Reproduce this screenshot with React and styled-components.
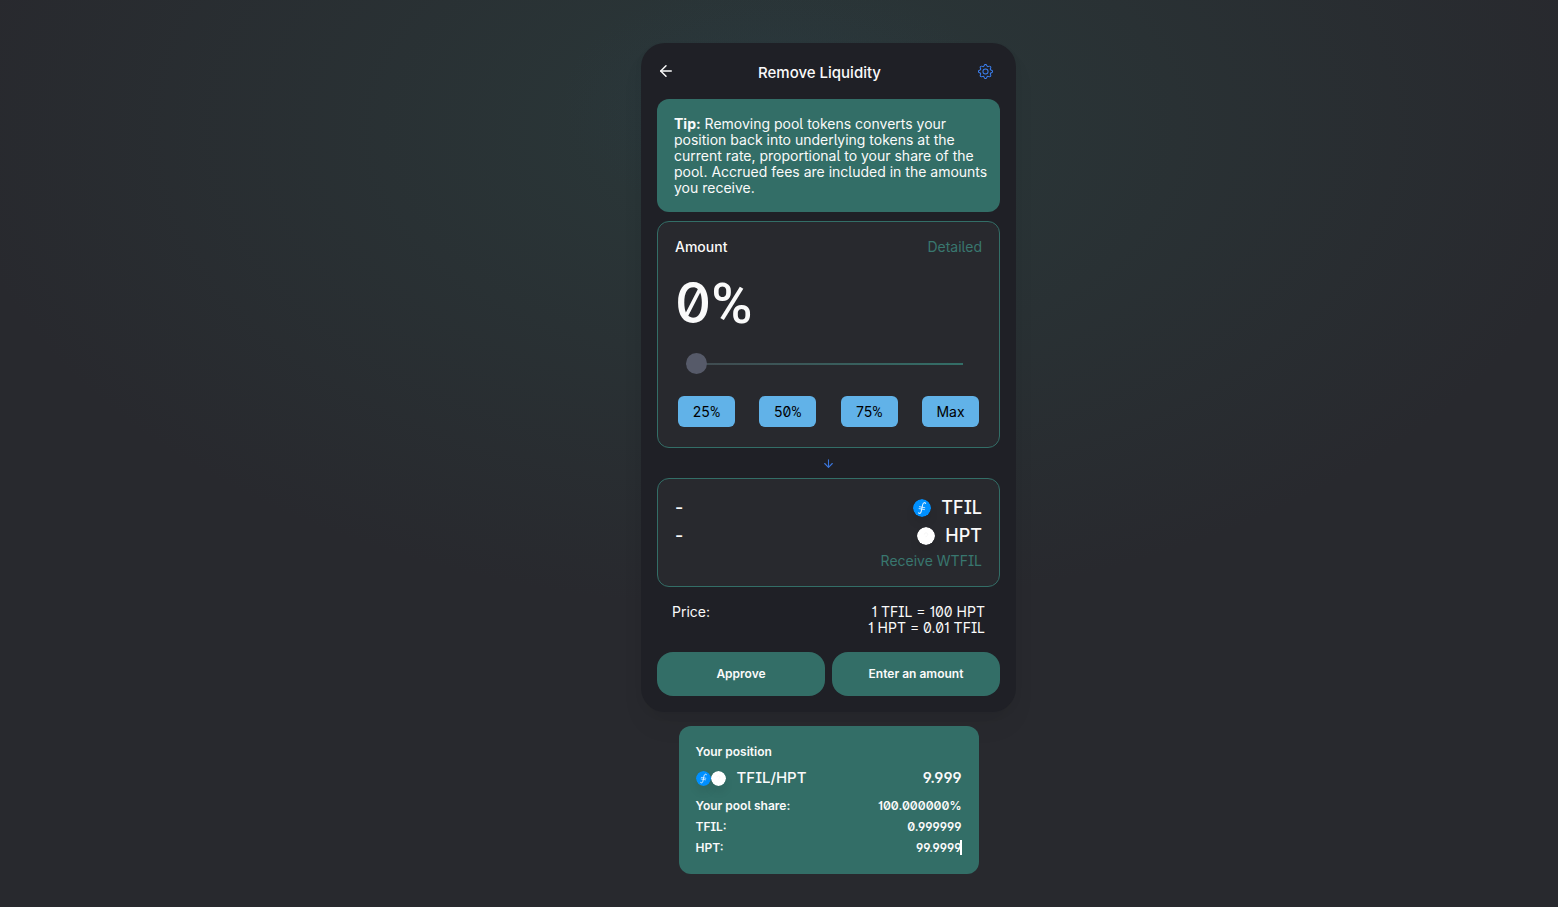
import React, { useState } from "react";
import styled, { createGlobalStyle, css } from "styled-components";
import { ArrowLeft, ArrowDown } from "lucide-react";
import { BsGear } from "react-icons/bs";

const teal = "#336e67";
const tealText = "#39776f";
const white = "#fafafa";

const GlobalStyle = createGlobalStyle`
  *, *::before, *::after { box-sizing: border-box; }
  body {
    margin: 0;
    color: ${white};
    background-color: #28292e;
    font-family: Inter, "Liberation Sans", sans-serif;
    font-size: 14px;
    line-height: 16px;
    font-feature-settings: "ss01" on, "ss02" on, "cv01" on, "cv03" on;
  }
  button, input { font: inherit; font-feature-settings: inherit; color: inherit; }
`;

const Page = styled.div`
  min-height: 100vh;
  padding: 43px 0 33px 99px;
  background:
    radial-gradient(ellipse 14vw 14vh at 50% 100px, rgba(44, 66, 96, 0.14), rgba(44, 66, 96, 0) 100%),
    radial-gradient(ellipse 53vw 53vh at 50% 130px, rgba(46, 84, 78, 0.36), rgba(46, 84, 78, 0) 100%);
`;

const Main = styled.main`
  display: flex;
  flex-direction: column;
  align-items: center;
  gap: 14px;
`;

const Card = styled.section`
  width: 100%;
  max-width: 375px;
  padding: 16px;
  border-radius: 24px;
  background: #1f2026;
  box-shadow: 0 4px 8px rgba(0, 0, 0, 0.04), 0 16px 24px rgba(0, 0, 0, 0.04);
`;

const Header = styled.header`
  display: flex;
  align-items: center;
  justify-content: space-between;
  height: 24px;
  margin-bottom: 16px;
`;

const Title = styled.h1`
  margin: 0;
  padding-top: 4px;
  font-size: 15px;
  line-height: 20px;
  font-weight: 500;
`;

const IconButton = styled.button`
  display: flex;
  padding: 0;
  border: 0;
  background: none;
  color: ${white};
`;

const SettingsButton = styled(IconButton)`
  padding: 0 7px 0 14px;
  color: #3b82f6;
`;

const Tip = styled.p`
  margin: 0 0 9px;
  padding: 17px 11px 16px 17px;
  border-radius: 12px;
  background: ${teal};
`;

const Panel = styled.section`
  border: 1px solid ${teal};
  border-radius: 12px;
  background: #28292e;
  padding: ${(p) => (p.$output ? "18px 17px 17px" : "17px")};
`;

const Row = styled.div`
  display: flex;
  align-items: center;
  justify-content: space-between;
`;

const SectionLabel = styled.h2`
  margin: 0;
  font-size: 14px;
  font-weight: 500;
`;

const LinkText = styled.a`
  color: ${tealText};
  text-decoration: none;
`;

const Percent = styled.output`
  display: block;
  margin: 14px 0;
  font-size: 56px;
  line-height: 68px;
  font-weight: 500;
`;

const PercentSign = styled.span`
  font-family: Roboto, sans-serif;
`;

const Slider = styled.input`
  appearance: none;
  display: block;
  width: calc(100% - 30px);
  height: 22px;
  margin: 0 11px 22px;
  background: linear-gradient(90deg, #41494f, ${teal}) center 11px / 100% 2px no-repeat;
  &::-webkit-slider-thumb {
    appearance: none;
    width: 21px;
    height: 21px;
    border-radius: 50%;
    background: #565a69;
  }
`;

const Presets = styled.div`
  display: flex;
  justify-content: space-between;
  padding: 0 3px 3px;
`;

const PresetButton = styled.button`
  width: 57px;
  height: 31px;
  padding: 0;
  border: 0;
  border-radius: 6px;
  background: #61b2e8;
  color: #000;
`;

const Divider = styled.div`
  display: flex;
  justify-content: center;
  align-items: center;
  height: 30px;
  color: #3b76dc;
`;

const Outputs = styled.div`
  display: flex;
  flex-direction: column;
  gap: 6px;
`;

const Figure = styled.span`
  display: flex;
  align-items: center;
  gap: 10px;
  font-size: 18px;
  line-height: 22px;
  font-weight: 500;
`;

const Receive = styled.div`
  text-align: right;
`;

const Price = styled.div`
  display: flex;
  justify-content: space-between;
  padding: 17px 15px 16px;
  text-align: right;
`;

const Actions = styled.div`
  display: grid;
  grid-template-columns: 1fr 1fr;
  gap: 7px;
`;

const ActionButton = styled.button`
  height: 44px;
  border: 0;
  border-radius: 16px;
  background: ${teal};
  font-size: 12px;
  font-weight: 600;
`;

const Position = styled.section`
  width: 100%;
  max-width: 300px;
  padding: 18px 17px;
  border-radius: 12px;
  background: ${teal};
  font-size: 12px;
  font-weight: 600;
`;

const PositionTitle = styled.h2`
  margin: 0 0 8px;
  font-size: 12px;
  font-weight: 600;
`;

const PairRow = styled(Row)`
  margin-bottom: 10px;
  font-size: 15px;
  line-height: 20px;
`;

const Pair = styled.span`
  display: flex;
  align-items: center;
  font-weight: 500;
`;

const PairName = styled.span`
  margin-left: 11px;
`;

const Stats = styled.div`
  display: flex;
  flex-direction: column;
  gap: 5px;
`;

const Value = styled.span`
  position: relative;
  ${(p) =>
    p.$caret &&
    css`
      &::after {
        content: "";
        position: absolute;
        top: 0;
        right: 0;
        width: 2px;
        height: 15px;
        background: #fff;
      }
    `}
`;

const Coin = styled.svg`
  display: block;
  flex: none;
  border-radius: 50%;
  box-shadow: 0 6px 10px rgba(0, 0, 0, 0.075);
`;

function FilCoin({ size }) {
  return (
    <Coin width={size} height={size} viewBox="0 0 18 18" aria-hidden="true">
      <circle cx="9" cy="9" r="9" fill="#0090ff" />
      <g fill="none" stroke="#fff" strokeLinecap="round" strokeOpacity="0.85">
        <path d="M12.6 4.3C11.4 2.9 10 4 9.6 6L8.3 12.2C7.9 14.2 6.7 15 5.5 13.8" strokeWidth="1.1" />
        <path d="M6.4 7.7L11.8 8.7M6.1 9.6L11.5 10.6" strokeWidth="0.9" />
      </g>
    </Coin>
  );
}

function BlankCoin({ size }) {
  return (
    <Coin width={size} height={size} viewBox="0 0 18 18" aria-hidden="true">
      <circle cx="9" cy="9" r="9" fill="#fff" />
      <path d="M7.3 7.5C7.3 5.3 10.8 5.4 10.7 7.5C10.6 8.7 9 8.8 9 10.2M9 11.9V12" fill="none" stroke="#f5f5f5" />
    </Coin>
  );
}

const presets = [25, 50, 75, 100];

const stats = [
  ["Your pool share:", "100.000000%"],
  ["TFIL:", "0.999999"],
  ["HPT:", "99.9999"],
];

export default function App() {
  const [amount, setAmount] = useState(0);
  return (
    <>
      <GlobalStyle />
      <Page>
        <Main>
          <Card>
            <Header>
              <IconButton type="button" aria-label="Back">
                <ArrowLeft size={18} strokeWidth={2} />
              </IconButton>
              <Title>Remove Liquidity</Title>
              <SettingsButton type="button" aria-label="Settings">
                <BsGear size={15} />
              </SettingsButton>
            </Header>
            <Tip>
              <b>Tip:</b> Removing pool tokens converts your position back into underlying tokens at the
              current rate, proportional to your share of the pool. Accrued fees are included in the
              amounts you receive.
            </Tip>
            <Panel>
              <Row>
                <SectionLabel>Amount</SectionLabel>
                <LinkText href="#detailed">Detailed</LinkText>
              </Row>
              <Percent>
                {amount}
                <PercentSign>%</PercentSign>
              </Percent>
              <Slider
                type="range"
                min="0"
                max="100"
                aria-label="Amount"
                value={amount}
                onChange={(e) => setAmount(Number(e.target.value))}
              />
              <Presets>
                {presets.map((value) => (
                  <PresetButton key={value} type="button" onClick={() => setAmount(value)}>
                    {value === 100 ? (
                      "Max"
                    ) : (
                      <>
                        {value}
                        <PercentSign>%</PercentSign>
                      </>
                    )}
                  </PresetButton>
                ))}
              </Presets>
            </Panel>
            <Divider>
              <ArrowDown size={13} />
            </Divider>
            <Panel $output>
              <Outputs>
                <Row>
                  <Figure>-</Figure>
                  <Figure>
                    <FilCoin size={18} />
                    TFIL
                  </Figure>
                </Row>
                <Row>
                  <Figure>-</Figure>
                  <Figure>
                    <BlankCoin size={18} />
                    HPT
                  </Figure>
                </Row>
                <Receive>
                  <LinkText href="#receive">Receive WTFIL</LinkText>
                </Receive>
              </Outputs>
            </Panel>
            <Price>
              <span>Price:</span>
              <span>
                1 TFIL = 100 HPT
                <br />1 HPT = 0.01 TFIL
              </span>
            </Price>
            <Actions>
              <ActionButton type="button">Approve</ActionButton>
              <ActionButton type="button">Enter an amount</ActionButton>
            </Actions>
          </Card>
          <Position>
            <PositionTitle>Your position</PositionTitle>
            <PairRow>
              <Pair>
                <FilCoin size={15} />
                <BlankCoin size={15} />
                <PairName>TFIL/HPT</PairName>
              </Pair>
              <span>9.999</span>
            </PairRow>
            <Stats>
              {stats.map(([label, value]) => (
                <Row key={label}>
                  <span>{label}</span>
                  <Value $caret={label === "HPT:"}>{value}</Value>
                </Row>
              ))}
            </Stats>
          </Position>
        </Main>
      </Page>
    </>
  );
}
